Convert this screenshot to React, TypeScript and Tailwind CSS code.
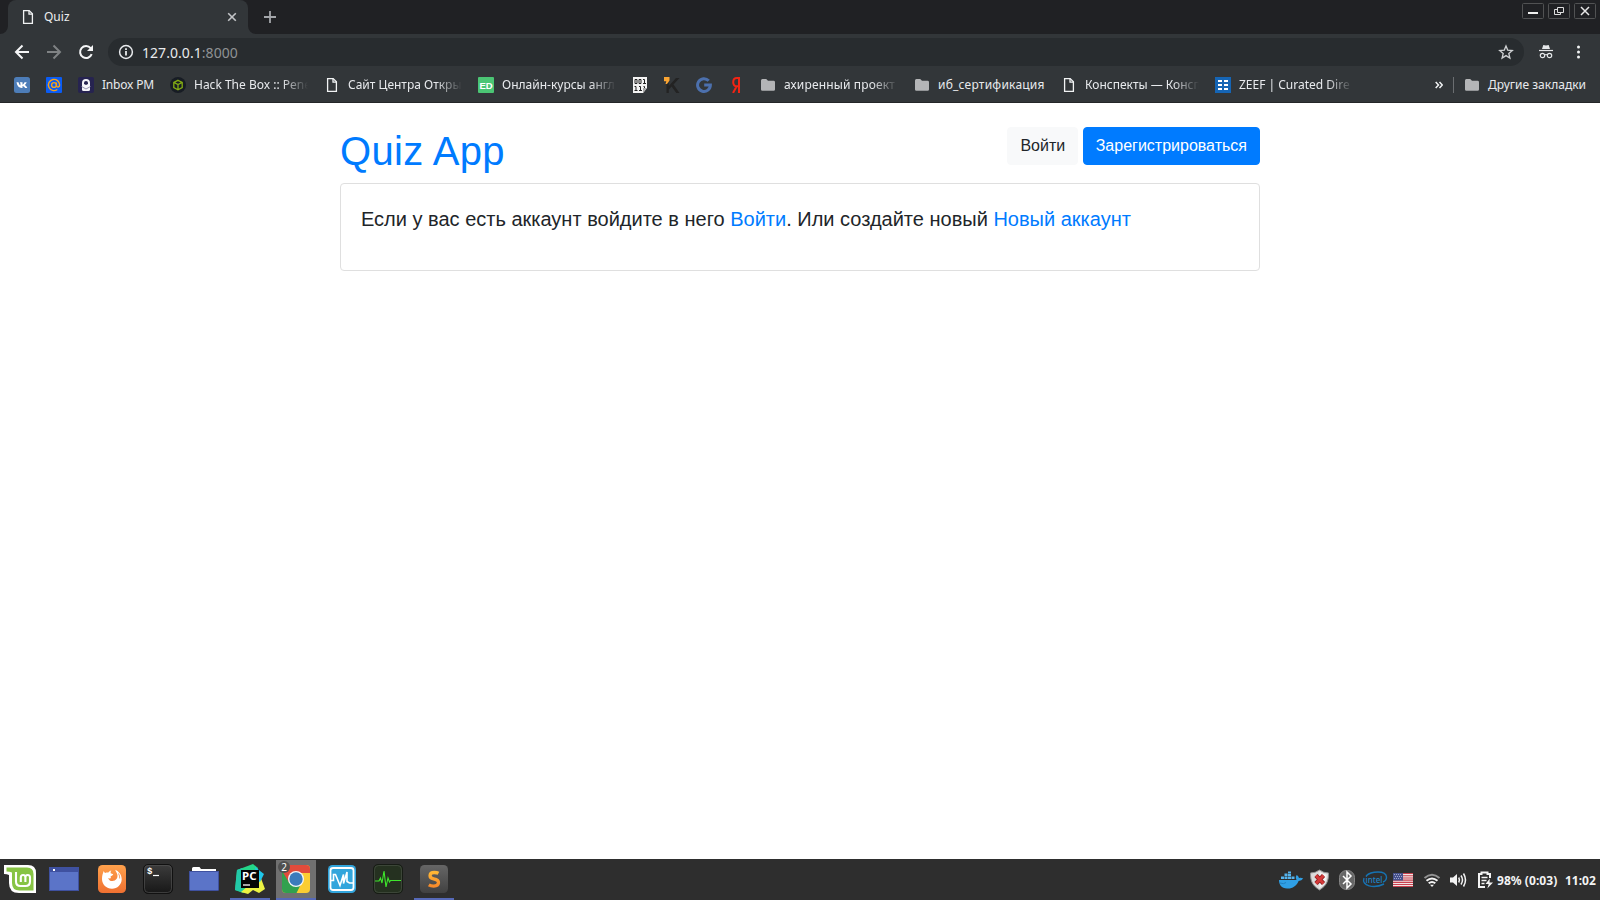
import type { ReactNode } from "react";

function PageIcon() {
  return (
    <svg width="16" height="16" viewBox="0 0 16 16" fill="none" stroke="#f1f3f4" strokeWidth="1.3" className="shrink-0">
      <path d="M3.6 1.6h5.6l3.2 3.2v9.6H3.6z" />
      <path d="M9 1.8v3.3h3.3" />
    </svg>
  );
}

function FolderIcon() {
  return (
    <svg width="16" height="16" viewBox="0 0 16 16" className="shrink-0">
      <path d="M1 3.6Q1 2 2.4 2h3.8l1.8 1.8h5.6Q15 3.8 15 5.2v7.2q0 1.4-1.4 1.4H2.4Q1 13.8 1 12.4z" fill="#b4b5b7" />
    </svg>
  );
}

function VkIcon() {
  return (
    <svg width="16" height="16" viewBox="0 0 16 16">
      <rect width="16" height="16" rx="2.5" fill="#4d7db8" />
      <path
        d="M2.500 5.200h2c.4 1.600 1 2.700 1.900 3.200V6.200L5.800 5.200h2.700v2.500c.9-.4 1.600-1.400 2-2.500h2.200c-.3 1.200-1 2.100-1.900 2.800.9.500 1.900 1.500 2.500 2.900h-2.200c-.6-1-1.400-1.700-2.600-2v2H7.800C4.800 10.900 3 8.700 2.500 5.200z"
        fill="#fff"
      />
    </svg>
  );
}

function MailIcon() {
  return (
    <svg width="16" height="16" viewBox="0 0 16 16" fill="none" stroke="#f6a21b" strokeWidth="1.4">
      <rect width="16" height="16" rx="1" fill="#0a5cf5" stroke="none" />
      <circle cx="8" cy="8" r="2.4" />
      <path d="M10.400 5.500v3c0 2.300 3.200 2 3.200-.5a5.600 5.600 0 1 0-2.300 4.500" />
    </svg>
  );
}

function ProtonIcon() {
  return (
    <svg width="16" height="16" viewBox="0 0 16 16">
      <rect width="16" height="16" rx="2" fill="#262350" />
      <path d="M4 6a4 4 0 0 1 8 0v6.500q0 1.500-1.500 1.500h-5Q4 14 4 12.500z" fill="#f4f4f8" />
      <path d="M6 6.900V6a2 2 0 0 1 4 0v.9L8 8z" fill="#262350" />
      <path d="M3.500 9.500L8 12l4.500-2.500" fill="none" stroke="#8a88a8" strokeWidth=".9" />
    </svg>
  );
}

function HtbIcon() {
  return (
    <svg width="16" height="16" viewBox="0 0 16 16">
      <circle cx="8" cy="8" r="8" fill="#171c24" />
      <path d="M8 3.300l4.200 2v5.300L8 12.800l-4.200-2.200V5.300zM3.800 5.400L8 7.500l4.200-2.100M8 7.500v5.200" fill="none" stroke="#83ac13" strokeWidth="1.300" />
    </svg>
  );
}

function EdIcon() {
  return (
    <span className="flex h-4 w-4 items-center justify-center rounded-[1px] bg-[#4bc574] pt-px font-['Liberation_Sans'] text-[9.500px] leading-none font-bold text-white">
      ED
    </span>
  );
}

function BinaryIcon() {
  return (
    <svg width="16" height="16" viewBox="0 0 16 16">
      <path d="M1 0h14v11l-4 5H1z" fill="#f4f4f4" />
      <path d="M11 16v-5h4z" fill="#a8a8a8" />
      <g fill="none" stroke="#222" strokeWidth="1">
        <path d="M3 2.500h2v4H3zM7 2.500h2v4H7zM11 2.500h1.500v4M11 6.500h3M2.500 9.500h1.500v4M2.500 13.500h3M7 9.500h1.500v4M7 13.500h3M11.500 9.500h1v1.500" />
      </g>
    </svg>
  );
}

function KIcon() {
  return (
    <svg width="16" height="16" viewBox="0 0 16 16">
      <path d="M2.500 6h2.300v3L12 1h3.500L9.500 7.500l6 8.500h-3.200L7.600 9.400 4.800 12.500V16H2.500z" fill="#232323" />
      <path d="M0 0h5.500v3.500L3 7H1.500L2.300 4.200H0z" fill="#fba532" />
    </svg>
  );
}

function GoogleGrayIcon() {
  return (
    <svg width="16" height="16" viewBox="0 0 16 16" fill="none" stroke="#4c70ad" strokeWidth="3">
      <path d="M12.700 3.700A6.400 6.400 0 1 0 14.400 8H8.200" />
    </svg>
  );
}

function YandexIcon() {
  return (
    <svg width="16" height="16" viewBox="0 0 16 16" fill="none" stroke="#f02414" strokeWidth="2">
      <path d="M11 16V1H9Q5.200 1 5.200 5.200 5.200 9.300 9 9.300h2M8.700 9.300L5 16" />
    </svg>
  );
}

function ZeefIcon() {
  return (
    <svg width="16" height="16" viewBox="0 0 16 16">
      <rect width="16" height="16" fill="#1565b5" />
      <path d="M3 3h4v2H3zM9 3h4v2H9zM3 7h4v2H3zM9 7h4v2H9zM3 11h4v2H3zM9 11h4v2H9z" fill="#fff" />
    </svg>
  );
}

function Bookmark({ icon, label, fade }: { icon: ReactNode; label?: string; fade?: boolean }) {
  return (
    <div className="flex h-5 shrink-0 items-center gap-2">
      <span className="flex h-4 w-4 shrink-0">{icon}</span>
      {label && (
        <span
          className={
            fade
              ? "w-[114px] whitespace-nowrap [mask-image:linear-gradient(to_right,#000_88px,transparent_114px)]"
              : "whitespace-nowrap"
          }
        >
          {label}
        </span>
      )}
    </div>
  );
}

function TabStrip() {
  return (
    <div className="flex h-[34px] bg-[#202124]">
      <svg width="8" height="34" viewBox="0 0 8 34">
        <path d="M8 26v8H0a8 8 0 0 0 8-8z" fill="#323639" />
      </svg>
      <div className="flex w-[240px] items-center rounded-t-lg bg-[#323639] pr-[11px] pl-3 text-[#eceef0]">
        <PageIcon />
        <span className="ml-2 flex-1">Quiz</span>
        <svg width="10" height="10" viewBox="0 0 10 10" stroke="#c3c5c8" strokeWidth="1.600">
          <path d="M1.200 1.200l7.600 7.600M8.800 1.200L1.200 8.800" />
        </svg>
      </div>
      <svg width="8" height="34" viewBox="0 0 8 34">
        <path d="M0 26v8h8a8 8 0 0 1-8-8z" fill="#323639" />
      </svg>
      <svg width="12" height="12" viewBox="0 0 12 12" stroke="#a3a6aa" strokeWidth="1.800" className="mt-[11px] ml-2">
        <path d="M6 0v12M0 6h12" />
      </svg>
      <div className="mt-[3px] mr-1 ml-auto flex gap-1">
        <svg width="22" height="16" viewBox="0 0 22 16" fill="none">
          <rect x=".5" y=".5" width="21" height="15" rx="1" stroke="#515253" />
          <path d="M6 10h10" stroke="#f0f0f0" strokeWidth="2" />
        </svg>
        <svg width="22" height="16" viewBox="0 0 22 16" fill="none" stroke="#dedede">
          <rect x=".5" y=".5" width="21" height="15" rx="1" stroke="#515253" />
          <path d="M9.500 9.500v-5h6v5zM9 6.500H6.500v5h6V10" />
        </svg>
        <svg width="22" height="16" viewBox="0 0 22 16" fill="none">
          <rect x=".5" y=".5" width="21" height="15" rx="1" stroke="#515253" />
          <path d="M7 4l8 8M15 4l-8 8" stroke="#e8e8e8" strokeWidth="1.500" />
        </svg>
      </div>
    </div>
  );
}

function AddressBar() {
  return (
    <div className="flex h-[36px] items-center bg-[#323639] pl-3.5">
      <svg width="16" height="16" viewBox="0 0 16 16" fill="none" stroke="#f5f6f7" strokeWidth="2">
        <path d="M15 8H2.500M8.500 1.500L2 8l6.500 6.500" />
      </svg>
      <svg width="16" height="16" viewBox="0 0 16 16" fill="none" stroke="#7f8284" strokeWidth="2" className="ml-4">
        <path d="M1 8h12.500M7.500 1.500L14 8l-6.500 6.500" />
      </svg>
      <svg width="16" height="16" viewBox="0 0 16 16" fill="none" stroke="#f5f6f7" strokeWidth="2" className="ml-4">
        <path d="M13.700 10.200A6 6 0 1 1 12.700 4.200" />
        <path d="M15 1v6H9z" fill="#f5f6f7" stroke="none" />
      </svg>
      <div className="ml-[14px] flex h-7 w-[1416px] items-center rounded-full bg-[#282c2f] pr-2.5 pl-2.5">
        <svg width="16" height="16" viewBox="0 0 16 16" fill="none" stroke="#e8eaed" strokeWidth="1.500">
          <circle cx="8" cy="8" r="6.400" />
          <path d="M8 7v4.500M8 4.300v1.600" strokeWidth="1.800" />
        </svg>
        <span className="mt-px ml-2 flex-1 text-[14px] leading-5 tracking-[0.05px] text-[#e8eaed]">
          127.0.0.1<span className="text-[#8f9295]">:8000</span>
        </span>
        <svg width="16" height="16" viewBox="0 0 16 16" fill="none" stroke="#d0d2d4" strokeWidth="1.300">
          <path d="M8 1.900l1.700 4.200 4.600.4-3.500 3 1.100 4.500L8 11.600 4.100 14l1.100-4.500-3.500-3 4.600-.4z" />
        </svg>
      </div>
      <svg width="14" height="16" viewBox="0 0 14 16" fill="none" stroke="#e5e7e9" className="ml-[15px]">
        <path d="M4.300 1l2.700.6L9.700 1l1.300 4H3z" fill="#e5e7e9" stroke="none" />
        <path d="M0 6.500h14" strokeWidth="1.200" />
        <circle cx="3.500" cy="11.500" r="2.200" strokeWidth="1.200" />
        <circle cx="10.500" cy="11.500" r="2.200" strokeWidth="1.200" />
        <path d="M5.500 11q1.500-1 3 0" />
      </svg>
      <svg width="4" height="16" viewBox="0 0 4 16" fill="#f1f3f4" className="ml-[23px]">
        <circle cx="2.500" cy="3" r="1.500" />
        <circle cx="2.500" cy="8" r="1.500" />
        <circle cx="2.500" cy="13" r="1.500" />
      </svg>
    </div>
  );
}

function BookmarksBar() {
  return (
    <div className="flex h-[33px] items-center gap-4 border-b border-[#242628] bg-[#323639] pb-[2px] pl-3.5 text-[#e8eaed]">
      <Bookmark icon={<VkIcon />} />
      <Bookmark icon={<MailIcon />} />
      <div className="w-[76px] tracking-[-0.2px]">
        <Bookmark icon={<ProtonIcon />} label="Inbox PM" />
      </div>
      <Bookmark icon={<HtbIcon />} label="Hack The Box :: Pene" fade />
      <Bookmark icon={<PageIcon />} label="Сайт Центра Откры" fade />
      <Bookmark icon={<EdIcon />} label="Онлайн-курсы англ" fade />
      <Bookmark icon={<BinaryIcon />} />
      <Bookmark icon={<KIcon />} />
      <Bookmark icon={<GoogleGrayIcon />} />
      <Bookmark icon={<YandexIcon />} />
      <div className="tracking-[0.15px]">
        <Bookmark icon={<FolderIcon />} label="ахиренный проект" fade />
      </div>
      <div className="w-[131px] tracking-[0.220px]">
        <Bookmark icon={<FolderIcon />} label="иб_сертификация" />
      </div>
      <Bookmark icon={<PageIcon />} label="Конспекты — Консп" fade />
      <Bookmark icon={<ZeefIcon />} label="ZEEF | Curated Dire" fade />
      <div className="ml-auto flex items-center pr-[14px]">
        <svg width="8" height="8" viewBox="0 0 8 8" fill="none" stroke="#f1f3f4" strokeWidth="1.500">
          <path d="M.7.900L3.500 4 .7 7.100M4.500.900L7.300 4 4.500 7.100" />
        </svg>
        <div className="mr-[10px] ml-[10px] h-4 w-px bg-[#6b6e71]" />
        <Bookmark icon={<FolderIcon />} label="Другие закладки" />
      </div>
    </div>
  );
}

function QuizPage() {
  return (
    <main className="flex-1 bg-white pt-6 font-['Liberation_Sans',sans-serif] text-[#212529]">
      <div className="mx-auto w-[920px]">
        <header className="flex h-14 items-start justify-between">
          <h1 className="text-[40px] leading-[48px] tracking-[0.3px] text-[#007bff]">Quiz App</h1>
          <div className="flex gap-[5px] text-base leading-6">
            <button className="rounded border border-[#f8f9fa] bg-[#f8f9fa] py-1.5 pr-[11.500px] pl-[12.500px]">Войти</button>
            <button className="rounded border border-[#007bff] bg-[#007bff] px-3 py-1.5 text-white">Зарегистрироваться</button>
          </div>
        </header>
        <section className="h-[88px] rounded border border-[#dfdfdf] p-5">
          <p className="text-[20px] leading-[30px]">
            Если у вас есть аккаунт войдите в него <a className="text-[#007bff]">Войти</a>. Или создайте новый{" "}
            <a className="text-[#007bff]">Новый аккаунт</a>
          </p>
        </section>
      </div>
    </main>
  );
}

function MintIcon() {
  return (
    <svg width="32" height="30" viewBox="0 0 32 30">
      <path d="M0 1h24q8 0 8 8v20H15Q5 29 5 19v-8Q3 10 0 10z" fill="#fff" />
      <path d="M2.500 3.500H23q6.500 0 6.500 6.500v16.500H15.500Q8 26.500 8 19V8.500Q6 7.500 2.500 7.500z" fill="#87c444" />
      <path
        d="M12 8v9.500q0 4.500 4.500 4.500h5q4.500 0 4.500-4.500v-4q0-2.500-2.300-2.500t-2.300 2.500v4.500M21.400 13.500q0-2.500-2.300-2.500t-2.300 2.500v4.500"
        fill="none"
        stroke="#fff"
        strokeWidth="2.100"
      />
    </svg>
  );
}

function DesktopIcon() {
  return (
    <svg width="30" height="24" viewBox="0 0 30 24">
      <rect width="30" height="24" fill="#3f51a0" />
      <rect x="1" y="5" width="28" height="18" fill="#5b74c8" />
      <rect x="4" y="2" width="2" height="2" fill="#fff" />
    </svg>
  );
}

function FirefoxIcon() {
  return (
    <svg width="28" height="28" viewBox="0 0 28 28">
      <defs>
        <linearGradient id="ffx" x2="0" y2="1">
          <stop stopColor="#ffa14c" />
          <stop offset="1" stopColor="#ef7031" />
        </linearGradient>
      </defs>
      <rect width="28" height="28" rx="4.500" fill="url(#ffx)" />
      <path
        d="M5.700 6c.3.900.8 1.500 1.500 1.900 1.100-.5 2.200-.6 3.200-.3.700-1.100 1.700-1.800 2.900-2-.7.800-.9 1.700-.6 2.700.8.500 1.700.5 2.500.9-.3 1.100-1.600 1.400-2.500 2.100-.2.800-.1 1.300.4 1.600-1 .7-2 .6-2.900 0 .5 2.100 2.100 3.300 4.200 3.200 3.600-.2 5.600-3 5-6.300-.3-1.700-1.700-3-2.100-5 3.700 1.700 6.500 5.300 6.400 9.400-.1 5.300-4.300 9.500-9.700 9.500-5.600 0-10-4.200-10-9.700 0-3 .7-5.400 1.700-8z"
        fill="#fff"
      />
      <path d="M20.500 8.500q1.500 2.500 1.200 5" fill="none" stroke="#f5883f" strokeWidth=".8" />
    </svg>
  );
}

function TerminalIcon() {
  return (
    <svg width="30" height="30" viewBox="0 0 30 30">
      <defs>
        <linearGradient id="term" x2="0" y2="1">
          <stop stopColor="#3c3c3c" />
          <stop offset="1" stopColor="#171717" />
        </linearGradient>
      </defs>
      <rect x=".5" y=".5" width="29" height="29" rx="4.500" fill="url(#term)" stroke="#111" />
      <rect x="1.500" y="1.500" width="27" height="27" rx="4" fill="none" stroke="#555" strokeWidth=".6" />
      <text x="4" y="10" fill="#fff" fontSize="9" fontFamily="Liberation Mono" fontWeight="bold">
        $
      </text>
      <path d="M10 11.500h6" stroke="#fff" strokeWidth="1.200" />
    </svg>
  );
}

function FilesIcon() {
  return (
    <svg width="30" height="26" viewBox="0 0 30 26">
      <path d="M3 5V2.500Q3 1 4.500 1h6L12 3h15v4H3z" fill="#fff" />
      <path d="M0 5h30v18.500q0 1.500-1.500 1.500h-27Q0 25 0 23.500z" fill="#3f51a0" />
      <path d="M1 6h28v18H1z" fill="#5b74c8" />
    </svg>
  );
}

function PyCharmIcon() {
  return (
    <svg width="30" height="30" viewBox="0 0 30 30">
      <path d="M2 6L18 0l5 4-2 20-13 5-8-3z" fill="#24d789" />
      <path d="M2 6l5-2v24l-7-2z" fill="#22c8a8" />
      <path d="M24 9l6 16-6 4-6-3-5 4-7-2 7-6 10-2z" fill="#ecf343" />
      <path d="M20 3l9 7-4 8-3-2z" fill="#20c7ea" />
      <rect x="6" y="6" width="18" height="18" fill="#050505" />
      <text x="7" y="15.500" fill="#fff" fontSize="10.500" fontWeight="bold" fontFamily="Noto Sans" textLength="14.500" lengthAdjust="spacingAndGlyphs">
        PC
      </text>
      <path d="M8 21h7" stroke="#fff" strokeWidth="1.300" />
    </svg>
  );
}

function ChromeIcon() {
  return (
    <svg width="30" height="30" viewBox="0 0 30 30">
      <defs>
        <clipPath id="chr">
          <rect x="1" y="1" width="28" height="28" rx="4" />
        </clipPath>
      </defs>
      <g clipPath="url(#chr)">
        <rect width="30" height="30" fill="#fbcd32" />
        <path d="M0 0h30v9H15L7 19 0 7z" fill="#e14b3b" />
        <path d="M0 5l8 13.500 11 3.500-4 8H0z" fill="#31a14e" />
      </g>
      <circle cx="15" cy="15" r="8" fill="#f4f6f8" />
      <circle cx="15" cy="15" r="6.700" fill="#3c7bbb" />
    </svg>
  );
}

function VmIcon() {
  return (
    <svg width="28" height="28" viewBox="0 0 28 28" fill="none" stroke="#fff">
      <rect width="28" height="28" rx="4.500" fill="#32a5dc" stroke="none" />
      <rect x="2.500" y="3" width="23" height="22" rx="2.500" strokeWidth="1.800" />
      <path d="M3 15.500h2.500V9.500h2L12 20.500l3.500-11v9L19 7v9.500l2.500 1.500h4" strokeWidth="1.600" />
    </svg>
  );
}

function MonitorIcon() {
  return (
    <svg width="30" height="30" viewBox="0 0 30 30" fill="none">
      <rect x=".5" y=".5" width="29" height="29" rx="4.500" fill="#253120" stroke="#171c15" />
      <rect x="1.500" y="1.500" width="27" height="27" rx="4" stroke="#4c5548" strokeWidth=".6" />
      <path d="M2 17h4l1.500-3 1.500 5L11 7l2 16 2-9 1.500 4 1-1.500H28" stroke="#3ee82c" strokeWidth="1.100" />
    </svg>
  );
}

function SublimeIcon() {
  return (
    <svg width="28" height="28" viewBox="0 0 28 28">
      <defs>
        <linearGradient id="subBg" x2="0" y2="1">
          <stop stopColor="#666" />
          <stop offset="1" stopColor="#414141" />
        </linearGradient>
        <linearGradient id="subS" x2="0" y2="1">
          <stop stopColor="#ffb634" />
          <stop offset="1" stopColor="#f78b2b" />
        </linearGradient>
      </defs>
      <rect width="28" height="28" rx="4.500" fill="url(#subBg)" />
      <path d="M18.500 8.300Q17 7.500 14.300 7.500c-5.400 0-5.700 5.300-.7 6.300 7.200 1.300 5.700 7.300.2 7.300q-3 0-5-1.200" fill="none" stroke="url(#subS)" strokeWidth="3.300" />
    </svg>
  );
}

function TaskItem({ children, open, active }: { children: ReactNode; open?: boolean; active?: boolean }) {
  return (
    <div
      className={
        "relative flex h-10 w-10 items-center justify-center border-b-2 " +
        (open || active ? "border-[#5669b8] " : "border-transparent ") +
        (active ? "bg-[#707070]" : "")
      }
    >
      {children}
    </div>
  );
}

function Tray() {
  return (
    <div className="ml-auto flex h-10 items-center pr-[5px] text-[12px] font-bold text-[#f3f3f3]">
      <svg width="28" height="24" viewBox="0 0 28 24">
        <path d="M2 12h17.500q-1.500-3 .3-5Q21.500 8 22 10q2.200-.6 4.200.6-1.500 2.300-4.600 2.300C19.500 18 15 21 10 20.500 4.500 20 2 17 2 12z" fill="#2f9fe5" />
        <path d="M4 8.500h3V11H4zM7.500 8.500h3V11h-3zM11 8.500h3V11h-3zM14.500 8.500h3V11h-3zM7.500 5.500h3V8h-3zM11 5.500h3V8h-3zM11 3.500h3V5h-3z" fill="#55b4ee" />
        <path d="M3 15q4 1.500 6-.5" stroke="#1f7fc0" fill="none" />
      </svg>
      <svg width="28" height="24" viewBox="0 0 28 24">
        <path d="M14.500 2q4 3 9 3c0 7-1 12-9 17-8-5-9-10-9-17q5 0 9-3z" fill="#dcdcdc" stroke="#8f8f8f" />
        <path d="M14.500 4q3.500 2.300 7 2.500c0 6-1.500 9.500-7 13.500z" fill="#f4f4f4" />
        <path d="M11 7.500l7.500 8M18.500 7.500l-7.500 8" stroke="#8c2020" strokeWidth="4.400" />
        <path d="M11 7.500l7.500 8M18.500 7.500l-7.500 8" stroke="#d53a3a" strokeWidth="2.600" />
      </svg>
      <svg width="28" height="24" viewBox="0 0 28 24" fill="none">
        <rect x="6.500" y="2.500" width="15" height="19" rx="7" fill="#666" stroke="#858585" />
        <path d="M10 8l8 8-4 4V4l4 4-8 8" stroke="#fff" strokeWidth="1.500" />
      </svg>
      <svg width="28" height="24" viewBox="0 0 28 24" fill="none" stroke="#1673b2">
        <path d="M5 8C10 3 25 2 25.500 9c0 3-2 4.500-3.500 5M3 10c-3 8 10 11 20 6" strokeWidth="1.400" />
        <text x="4.500" y="15" fill="#1f83c4" stroke="none" fontFamily="Noto Sans" fontSize="9" fontWeight="500" textLength="17" lengthAdjust="spacingAndGlyphs">
          intel
        </text>
      </svg>
      <svg width="28" height="24" viewBox="0 0 28 24">
        <rect x="4" y="5" width="20" height="14" fill="#f0e4e4" />
        <path d="M4 5h20v1.100H4zM4 7.200h20v1.100H4zM4 9.400h20v1.100H4zM4 11.600h20v1.100H4zM4 13.800h20v1.100H4zM4 16h20v1.100H4zM4 18h20v1H4z" fill="#c9404e" />
        <rect x="4" y="5" width="10" height="7.500" fill="#47528c" />
        <path d="M5 6.500h8M6 8.500h7M5 10.500h8" stroke="#b7bddc" strokeWidth=".8" strokeDasharray="1 1" />
      </svg>
      <svg width="28" height="24" viewBox="0 0 28 24" fill="none" strokeWidth="2">
        <path d="M7.500 10q7.500-6.500 15 0" stroke="#929292" />
        <path d="M9.500 12.700q5.500-4.500 11 0" stroke="#f3f3f3" />
        <path d="M11.700 15.300q3.300-2.700 6.600 0" stroke="#f3f3f3" />
        <path d="M13 16.800h4l-2 2.200z" fill="#f3f3f3" stroke="none" />
      </svg>
      <svg width="26" height="24" viewBox="0 0 26 24" fill="none" stroke="#f3f3f3" strokeWidth="1.500">
        <path d="M5 9.500h3L12 6v12l-4-3.500H5z" fill="#f3f3f3" stroke="none" />
        <path d="M13.700 9.500q1.500 2.500 0 5M16 7.500q3 4.500 0 9M18.500 5.500q4 6.500 0 13" />
      </svg>
      <svg width="26" height="24" viewBox="0 0 26 24" fill="none" stroke="#f3f3f3" strokeWidth="2">
        <path d="M19 10V6h-2.500V4.500h-6V6H8v13h6" />
        <path d="M10.500 9.500h6M10.500 12.500h5M10.500 15.500h3" strokeWidth="1.600" />
        <path d="M18.800 10.500L14.500 16h3.200l-1.400 4.500L22 14.500h-3.500z" fill="#f3f3f3" stroke="none" />
      </svg>
      <span className="mt-[2px] w-[68px] whitespace-nowrap tracking-[0.05px]">98% (0:03)</span>
      <span className="mt-[2px] w-[30px] whitespace-nowrap">11:02</span>
    </div>
  );
}

function Taskbar() {
  return (
    <footer className="flex h-[41px] items-end bg-[#2e2e2e]">
      <TaskItem>
        <MintIcon />
      </TaskItem>
      <div className="mr-2 ml-1">
        <TaskItem>
          <DesktopIcon />
        </TaskItem>
      </div>
      <div className="flex gap-1.5">
        <TaskItem>
          <FirefoxIcon />
        </TaskItem>
        <TaskItem>
          <TerminalIcon />
        </TaskItem>
        <TaskItem>
          <FilesIcon />
        </TaskItem>
        <TaskItem open>
          <PyCharmIcon />
        </TaskItem>
        <TaskItem active>
          <ChromeIcon />
          <span className="absolute top-[1px] left-[2px] flex h-3 w-3 items-center justify-center rounded-full bg-[#505050] text-[10px] leading-none text-white">
            2
          </span>
        </TaskItem>
        <TaskItem>
          <VmIcon />
        </TaskItem>
        <TaskItem>
          <MonitorIcon />
        </TaskItem>
        <TaskItem open>
          <SublimeIcon />
        </TaskItem>
      </div>
      <Tray />
    </footer>
  );
}

export default function App() {
  return (
    <div className="flex h-[900px] w-[1600px] flex-col overflow-hidden font-['Noto_Sans',sans-serif] text-[12px] leading-4">
      <TabStrip />
      <AddressBar />
      <BookmarksBar />
      <QuizPage />
      <Taskbar />
    </div>
  );
}
